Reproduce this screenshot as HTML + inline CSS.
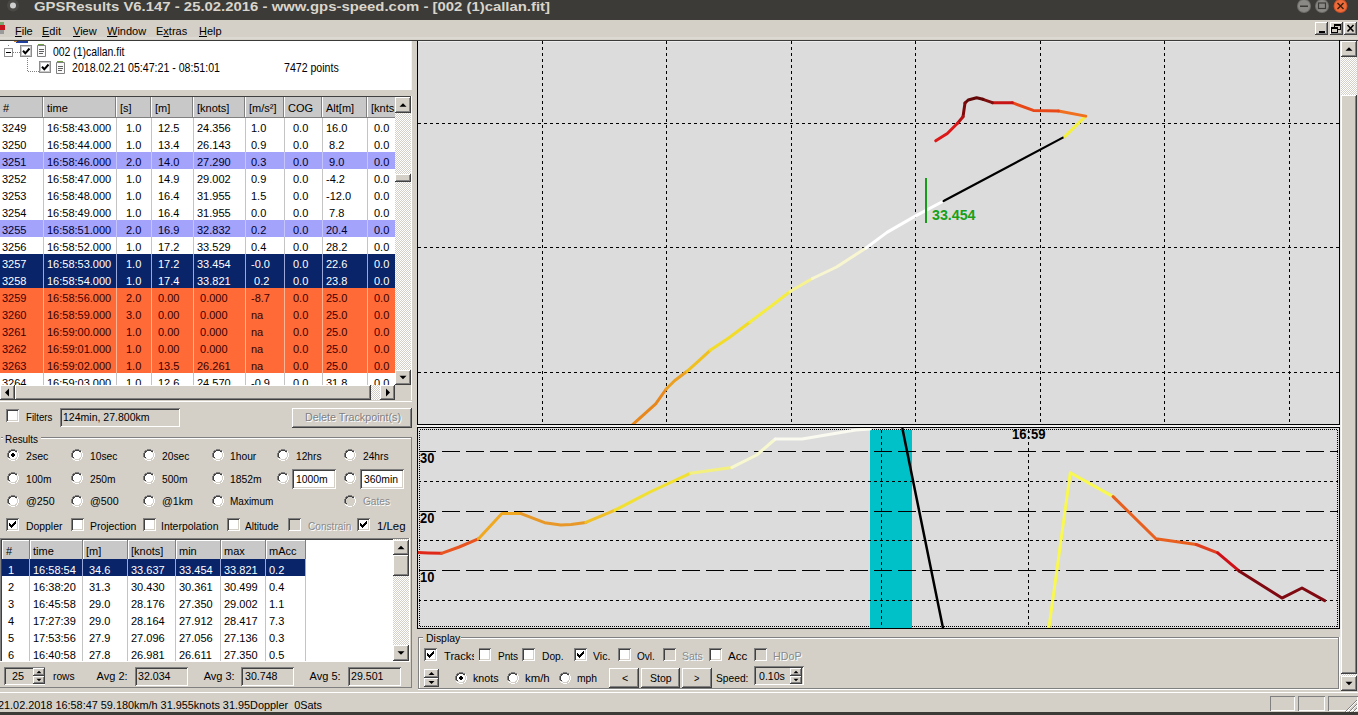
<!DOCTYPE html>
<html><head><meta charset="utf-8"><style>
html,body{margin:0;padding:0;width:1358px;height:715px;overflow:hidden;background:#d4d0c8;position:relative;font-family:"Liberation Sans",sans-serif;color:#000}
div{position:absolute;box-sizing:border-box}
.t{white-space:pre}
</style></head><body>
<svg width="0" height="0" style="position:absolute"><defs><g id="rad"><rect x="4" y="0" width="4" height="1" fill="#808080"/><rect x="2" y="1" width="2" height="1" fill="#808080"/><rect x="4" y="1" width="4" height="1" fill="#404040"/><rect x="8" y="1" width="2" height="1" fill="#808080"/><rect x="1" y="2" width="1" height="1" fill="#808080"/><rect x="2" y="2" width="2" height="1" fill="#404040"/><rect x="4" y="2" width="4" height="1" fill="#fff"/><rect x="8" y="2" width="2" height="1" fill="#404040"/><rect x="10" y="2" width="1" height="1" fill="#fff"/><rect x="1" y="3" width="1" height="1" fill="#808080"/><rect x="2" y="3" width="1" height="1" fill="#404040"/><rect x="3" y="3" width="6" height="1" fill="#fff"/><rect x="9" y="3" width="1" height="1" fill="#d4d0c8"/><rect x="10" y="3" width="1" height="1" fill="#fff"/><rect x="0" y="4" width="1" height="1" fill="#808080"/><rect x="1" y="4" width="1" height="1" fill="#404040"/><rect x="2" y="4" width="8" height="1" fill="#fff"/><rect x="10" y="4" width="1" height="1" fill="#d4d0c8"/><rect x="11" y="4" width="1" height="1" fill="#fff"/><rect x="0" y="5" width="1" height="1" fill="#808080"/><rect x="1" y="5" width="1" height="1" fill="#404040"/><rect x="2" y="5" width="8" height="1" fill="#fff"/><rect x="10" y="5" width="1" height="1" fill="#d4d0c8"/><rect x="11" y="5" width="1" height="1" fill="#fff"/><rect x="0" y="6" width="1" height="1" fill="#808080"/><rect x="1" y="6" width="1" height="1" fill="#404040"/><rect x="2" y="6" width="8" height="1" fill="#fff"/><rect x="10" y="6" width="1" height="1" fill="#d4d0c8"/><rect x="11" y="6" width="1" height="1" fill="#fff"/><rect x="0" y="7" width="1" height="1" fill="#808080"/><rect x="1" y="7" width="1" height="1" fill="#404040"/><rect x="2" y="7" width="8" height="1" fill="#fff"/><rect x="10" y="7" width="1" height="1" fill="#d4d0c8"/><rect x="11" y="7" width="1" height="1" fill="#fff"/><rect x="1" y="8" width="1" height="1" fill="#808080"/><rect x="2" y="8" width="1" height="1" fill="#404040"/><rect x="3" y="8" width="6" height="1" fill="#fff"/><rect x="9" y="8" width="1" height="1" fill="#d4d0c8"/><rect x="10" y="8" width="1" height="1" fill="#fff"/><rect x="1" y="9" width="1" height="1" fill="#fff"/><rect x="2" y="9" width="2" height="1" fill="#d4d0c8"/><rect x="4" y="9" width="4" height="1" fill="#fff"/><rect x="8" y="9" width="2" height="1" fill="#d4d0c8"/><rect x="10" y="9" width="1" height="1" fill="#fff"/><rect x="2" y="10" width="2" height="1" fill="#fff"/><rect x="4" y="10" width="4" height="1" fill="#d4d0c8"/><rect x="8" y="10" width="1" height="1" fill="#d4d0c8"/><rect x="9" y="10" width="1" height="1" fill="#fff"/><rect x="4" y="11" width="4" height="1" fill="#fff"/></g><g id="radd"><rect x="4" y="0" width="4" height="1" fill="#808080"/><rect x="2" y="1" width="2" height="1" fill="#808080"/><rect x="4" y="1" width="4" height="1" fill="#404040"/><rect x="8" y="1" width="2" height="1" fill="#808080"/><rect x="1" y="2" width="1" height="1" fill="#808080"/><rect x="2" y="2" width="2" height="1" fill="#404040"/><rect x="4" y="2" width="4" height="1" fill="#d4d0c8"/><rect x="8" y="2" width="2" height="1" fill="#404040"/><rect x="10" y="2" width="1" height="1" fill="#fff"/><rect x="1" y="3" width="1" height="1" fill="#808080"/><rect x="2" y="3" width="1" height="1" fill="#404040"/><rect x="3" y="3" width="6" height="1" fill="#d4d0c8"/><rect x="9" y="3" width="1" height="1" fill="#d4d0c8"/><rect x="10" y="3" width="1" height="1" fill="#fff"/><rect x="0" y="4" width="1" height="1" fill="#808080"/><rect x="1" y="4" width="1" height="1" fill="#404040"/><rect x="2" y="4" width="8" height="1" fill="#d4d0c8"/><rect x="10" y="4" width="1" height="1" fill="#d4d0c8"/><rect x="11" y="4" width="1" height="1" fill="#fff"/><rect x="0" y="5" width="1" height="1" fill="#808080"/><rect x="1" y="5" width="1" height="1" fill="#404040"/><rect x="2" y="5" width="8" height="1" fill="#d4d0c8"/><rect x="10" y="5" width="1" height="1" fill="#d4d0c8"/><rect x="11" y="5" width="1" height="1" fill="#fff"/><rect x="0" y="6" width="1" height="1" fill="#808080"/><rect x="1" y="6" width="1" height="1" fill="#404040"/><rect x="2" y="6" width="8" height="1" fill="#d4d0c8"/><rect x="10" y="6" width="1" height="1" fill="#d4d0c8"/><rect x="11" y="6" width="1" height="1" fill="#fff"/><rect x="0" y="7" width="1" height="1" fill="#808080"/><rect x="1" y="7" width="1" height="1" fill="#404040"/><rect x="2" y="7" width="8" height="1" fill="#d4d0c8"/><rect x="10" y="7" width="1" height="1" fill="#d4d0c8"/><rect x="11" y="7" width="1" height="1" fill="#fff"/><rect x="1" y="8" width="1" height="1" fill="#808080"/><rect x="2" y="8" width="1" height="1" fill="#404040"/><rect x="3" y="8" width="6" height="1" fill="#d4d0c8"/><rect x="9" y="8" width="1" height="1" fill="#d4d0c8"/><rect x="10" y="8" width="1" height="1" fill="#fff"/><rect x="1" y="9" width="1" height="1" fill="#fff"/><rect x="2" y="9" width="2" height="1" fill="#d4d0c8"/><rect x="4" y="9" width="4" height="1" fill="#d4d0c8"/><rect x="8" y="9" width="2" height="1" fill="#d4d0c8"/><rect x="10" y="9" width="1" height="1" fill="#fff"/><rect x="2" y="10" width="2" height="1" fill="#fff"/><rect x="4" y="10" width="4" height="1" fill="#d4d0c8"/><rect x="8" y="10" width="1" height="1" fill="#d4d0c8"/><rect x="9" y="10" width="1" height="1" fill="#fff"/><rect x="4" y="11" width="4" height="1" fill="#fff"/></g><g id="dot"><rect x="5" y="4" width="2" height="4" fill="#000"/><rect x="4" y="5" width="4" height="2" fill="#000"/></g><g id="chk"><rect x="9" y="3" width="1" height="1" fill="#000"/><rect x="8" y="4" width="2" height="1" fill="#000"/><rect x="3" y="5" width="1" height="1" fill="#000"/><rect x="7" y="5" width="3" height="1" fill="#000"/><rect x="3" y="6" width="2" height="1" fill="#000"/><rect x="6" y="6" width="3" height="1" fill="#000"/><rect x="3" y="7" width="5" height="1" fill="#000"/><rect x="4" y="8" width="3" height="1" fill="#000"/><rect x="5" y="9" width="1" height="1" fill="#000"/></g></defs></svg>
<div style="left:0px;top:0px;width:1358px;height:20px;background:#3c3b37"></div>
<svg style="position:absolute;left:0;top:0" width="30" height="19"><circle cx="13" cy="5.5" r="6" fill="#4a4945"/><circle cx="13" cy="5.5" r="3" fill="#cfcfcf"/></svg>
<div class="t" style="left:34.00px;top:-0.00px;font-size:13px;line-height:13px;transform:scaleX(1.1458);transform-origin:0 0;font-weight:bold;color:#d9d5cc;">GPSResults V6.147 - 25.02.2016 - www.gps-speed.com - [002 (1)callan.fit]</div>
<svg style="position:absolute;left:1290;top:0" width="68" height="19" style="left:1290px">
</svg>
<svg style="position:absolute;left:1290px;top:0" width="68" height="19"><circle cx="14" cy="6" r="7" fill="#6f6e6a"/><circle cx="14" cy="6" r="6" fill="#8a8985"/><rect x="10" y="5.5" width="8" height="1.5" fill="#3c3b37"/><circle cx="32" cy="6" r="7" fill="#6f6e6a"/><circle cx="32" cy="6" r="6" fill="#8a8985"/><rect x="28.5" y="3" width="7" height="5.5" fill="none" stroke="#3c3b37" stroke-width="1.2"/><circle cx="50.5" cy="6" r="7" fill="#c8502a"/><circle cx="50.5" cy="6" r="6" fill="#ef6b3a"/><path d="M47.5 3 L53.5 9 M53.5 3 L47.5 9" stroke="#3a2010" stroke-width="1.4"/></svg>
<div style="left:0px;top:20px;width:1358px;height:20px;background:#d4d0c8"></div>
<div style="left:0px;top:37px;width:1358px;height:2px;background:#dcd9d2"></div>
<div style="left:0px;top:40px;width:1358px;height:1px;background:#3a3a38"></div>
<svg style="position:absolute;left:0;top:19px" width="6" height="20"><rect x="0" y="3" width="4" height="3" fill="#7aa870"/><rect x="0" y="6" width="5" height="5" fill="#c8141e"/><rect x="0" y="11" width="4" height="4" fill="#9a9a9a"/></svg>
<div class="t" style="left:15.00px;top:25.69px;font-size:11px;line-height:11px;"><u>F</u>ile</div>
<div class="t" style="left:42.00px;top:25.69px;font-size:11px;line-height:11px;"><u>E</u>dit</div>
<div class="t" style="left:73.00px;top:25.69px;font-size:11px;line-height:11px;"><u>V</u>iew</div>
<div class="t" style="left:107.00px;top:25.69px;font-size:11px;line-height:11px;"><u>W</u>indow</div>
<div class="t" style="left:156.00px;top:25.69px;font-size:11px;line-height:11px;">E<u>x</u>tras</div>
<div class="t" style="left:199.00px;top:25.69px;font-size:11px;line-height:11px;"><u>H</u>elp</div>
<div style="left:1315px;top:22px;width:13px;height:13px;background:#d4d0c8;box-shadow:inset -1px -1px #404040,inset 1px 1px #fff,inset -2px -2px #808080,inset 2px 2px #d4d0c8;"></div>
<div style="left:1330px;top:22px;width:13px;height:13px;background:#d4d0c8;box-shadow:inset -1px -1px #404040,inset 1px 1px #fff,inset -2px -2px #808080,inset 2px 2px #d4d0c8;"></div>
<div style="left:1344px;top:22px;width:13px;height:13px;background:#d4d0c8;box-shadow:inset -1px -1px #404040,inset 1px 1px #fff,inset -2px -2px #808080,inset 2px 2px #d4d0c8;"></div>
<svg style="position:absolute;left:1315px;top:22px" width="43" height="13"><rect x="4" y="9" width="6" height="2" fill="#000"/><rect x="19.5" y="2.5" width="6" height="5" fill="none" stroke="#000" stroke-width="1"/><rect x="19" y="2" width="7" height="2" fill="#000"/><rect x="16.5" y="5.5" width="6" height="5" fill="#d4d0c8" stroke="#000" stroke-width="1"/><rect x="16" y="5" width="7" height="2" fill="#000"/><path d="M32.5 3 L38.5 9.5 M38.5 3 L32.5 9.5" stroke="#000" stroke-width="1.6"/></svg>
<div style="left:0px;top:712px;width:1358px;height:3px;background:#3c3b37"></div>
<div style="left:0px;top:41px;width:412px;height:51px;background:#fff"></div>
<div style="left:411px;top:41px;width:1px;height:51px;background:#f4f4f4"></div>
<div style="left:0px;top:90px;width:413px;height:2px;background:#d4d0c8"></div>
<div style="left:412px;top:41px;width:5px;height:51px;background:#d4d0c8"></div>
<div style="left:412px;top:41px;width:1px;height:51px;background:#f0f0f0"></div>
<svg style="position:absolute;left:14px;top:41px" width="16" height="3"><rect x="2" y="0" width="12" height="2" fill="#2040a0"/><rect x="0" y="0" width="3" height="1" fill="#c08040"/></svg>
<svg style="position:absolute;left:0;top:40px" width="80" height="40">
<path d="M8.5 5 V7 M8.5 9 V7" stroke="#808080" stroke-width="1" stroke-dasharray="1 1"/>
<rect x="4.5" y="8.5" width="8" height="8" fill="#fff" stroke="#909090"/>
<path d="M6 12.5 H11" stroke="#000"/>
<path d="M13 12.5 H20" stroke="#808080" stroke-dasharray="1 1"/>
<path d="M27.5 18 V31.5 H39" stroke="#808080" stroke-dasharray="1 1" fill="none"/>
</svg>
<svg style="position:absolute;left:20px;top:45px" width="13" height="13"><rect x="0.5" y="0.5" width="11" height="11" fill="#fff" stroke="#8c8c8c"/><rect x="1.5" y="1.5" width="9" height="9" fill="none" stroke="#c8c8c8"/><path d="M3 5.8 L5.3 8.3 L9.5 3.5" stroke="#000" stroke-width="2" fill="none"/></svg>
<svg style="position:absolute;left:39px;top:61px" width="13" height="13"><rect x="0.5" y="0.5" width="11" height="11" fill="#fff" stroke="#8c8c8c"/><rect x="1.5" y="1.5" width="9" height="9" fill="none" stroke="#c8c8c8"/><path d="M3 5.8 L5.3 8.3 L9.5 3.5" stroke="#000" stroke-width="2" fill="none"/></svg>
<svg style="position:absolute;left:36px;top:44px" width="12" height="14"><path d="M1.5 1.5 H9.5 V12.5 H1.5 Z" fill="#fafafa" stroke="#808080"/><path d="M3 5.5 H8 M3 7.5 H8 M3 9.5 H7" stroke="#606060"/><path d="M2 1 L3 0 L4 1 L5 0 L6 1 L7 0 L8 1" stroke="#70a040" fill="none"/></svg>
<svg style="position:absolute;left:55px;top:61px" width="12" height="14"><path d="M1.5 1.5 H9.5 V12.5 H1.5 Z" fill="#fafafa" stroke="#808080"/><path d="M3 5.5 H8 M3 7.5 H8 M3 9.5 H7" stroke="#606060"/><path d="M2 1 L3 0 L4 1 L5 0 L6 1 L7 0 L8 1" stroke="#70a040" fill="none"/></svg>
<div class="t" style="left:53.00px;top:46.14px;font-size:12px;line-height:12px;transform:scaleX(0.8702);transform-origin:0 0;">002 (1)callan.fit</div>
<div class="t" style="left:72.00px;top:62.14px;font-size:12px;line-height:12px;transform:scaleX(0.8836);transform-origin:0 0;">2018.02.21 05:47:21 - 08:51:01</div>
<div class="t" style="left:284.00px;top:62.14px;font-size:12px;line-height:12px;transform:scaleX(0.8815);transform-origin:0 0;">7472 points</div>
<div style="left:0px;top:92px;width:413px;height:5px;background:#d4d0c8"></div>
<div style="left:0px;top:96px;width:412px;height:1px;background:#404040"></div>
<div style="left:0px;top:97px;width:395px;height:288px;background:#fff"></div>
<div style="left:0px;top:97px;width:395px;height:20px;background:#c8c8c8"></div>
<div style="left:0px;top:117px;width:395px;height:1px;background:#808080"></div>
<div style="left:0px;top:152px;width:395px;height:17px;background:#a3a3fb"></div>
<div style="left:0px;top:220px;width:395px;height:17px;background:#a3a3fb"></div>
<div style="left:0px;top:254px;width:395px;height:17px;background:#0a246a"></div>
<div style="left:0px;top:271px;width:395px;height:17px;background:#0a246a"></div>
<div style="left:0px;top:288px;width:395px;height:17px;background:#ff6a36"></div>
<div style="left:0px;top:305px;width:395px;height:17px;background:#ff6a36"></div>
<div style="left:0px;top:322px;width:395px;height:17px;background:#ff6a36"></div>
<div style="left:0px;top:339px;width:395px;height:17px;background:#ff6a36"></div>
<div style="left:0px;top:356px;width:395px;height:17px;background:#ff6a36"></div>
<div style="left:42px;top:97px;width:1px;height:20px;background:#808080"></div>
<div style="left:43px;top:97px;width:1px;height:20px;background:#fff"></div>
<div style="left:43px;top:118px;width:1px;height:17px;background:#c4c4c4"></div>
<div style="left:43px;top:135px;width:1px;height:17px;background:#c4c4c4"></div>
<div style="left:43px;top:152px;width:1px;height:17px;background:#c4c4ff"></div>
<div style="left:43px;top:169px;width:1px;height:17px;background:#c4c4c4"></div>
<div style="left:43px;top:186px;width:1px;height:17px;background:#c4c4c4"></div>
<div style="left:43px;top:203px;width:1px;height:17px;background:#c4c4c4"></div>
<div style="left:43px;top:220px;width:1px;height:17px;background:#c4c4ff"></div>
<div style="left:43px;top:237px;width:1px;height:17px;background:#c4c4c4"></div>
<div style="left:43px;top:254px;width:1px;height:17px;background:#9aa8dc"></div>
<div style="left:43px;top:271px;width:1px;height:17px;background:#9aa8dc"></div>
<div style="left:43px;top:288px;width:1px;height:17px;background:#ffb494"></div>
<div style="left:43px;top:305px;width:1px;height:17px;background:#ffb494"></div>
<div style="left:43px;top:322px;width:1px;height:17px;background:#ffb494"></div>
<div style="left:43px;top:339px;width:1px;height:17px;background:#ffb494"></div>
<div style="left:43px;top:356px;width:1px;height:17px;background:#ffb494"></div>
<div style="left:43px;top:373px;width:1px;height:12px;background:#c4c4c4"></div>
<div style="left:115px;top:97px;width:1px;height:20px;background:#808080"></div>
<div style="left:116px;top:97px;width:1px;height:20px;background:#fff"></div>
<div style="left:116px;top:118px;width:1px;height:17px;background:#c4c4c4"></div>
<div style="left:116px;top:135px;width:1px;height:17px;background:#c4c4c4"></div>
<div style="left:116px;top:152px;width:1px;height:17px;background:#c4c4ff"></div>
<div style="left:116px;top:169px;width:1px;height:17px;background:#c4c4c4"></div>
<div style="left:116px;top:186px;width:1px;height:17px;background:#c4c4c4"></div>
<div style="left:116px;top:203px;width:1px;height:17px;background:#c4c4c4"></div>
<div style="left:116px;top:220px;width:1px;height:17px;background:#c4c4ff"></div>
<div style="left:116px;top:237px;width:1px;height:17px;background:#c4c4c4"></div>
<div style="left:116px;top:254px;width:1px;height:17px;background:#9aa8dc"></div>
<div style="left:116px;top:271px;width:1px;height:17px;background:#9aa8dc"></div>
<div style="left:116px;top:288px;width:1px;height:17px;background:#ffb494"></div>
<div style="left:116px;top:305px;width:1px;height:17px;background:#ffb494"></div>
<div style="left:116px;top:322px;width:1px;height:17px;background:#ffb494"></div>
<div style="left:116px;top:339px;width:1px;height:17px;background:#ffb494"></div>
<div style="left:116px;top:356px;width:1px;height:17px;background:#ffb494"></div>
<div style="left:116px;top:373px;width:1px;height:12px;background:#c4c4c4"></div>
<div style="left:150px;top:97px;width:1px;height:20px;background:#808080"></div>
<div style="left:151px;top:97px;width:1px;height:20px;background:#fff"></div>
<div style="left:151px;top:118px;width:1px;height:17px;background:#c4c4c4"></div>
<div style="left:151px;top:135px;width:1px;height:17px;background:#c4c4c4"></div>
<div style="left:151px;top:152px;width:1px;height:17px;background:#c4c4ff"></div>
<div style="left:151px;top:169px;width:1px;height:17px;background:#c4c4c4"></div>
<div style="left:151px;top:186px;width:1px;height:17px;background:#c4c4c4"></div>
<div style="left:151px;top:203px;width:1px;height:17px;background:#c4c4c4"></div>
<div style="left:151px;top:220px;width:1px;height:17px;background:#c4c4ff"></div>
<div style="left:151px;top:237px;width:1px;height:17px;background:#c4c4c4"></div>
<div style="left:151px;top:254px;width:1px;height:17px;background:#9aa8dc"></div>
<div style="left:151px;top:271px;width:1px;height:17px;background:#9aa8dc"></div>
<div style="left:151px;top:288px;width:1px;height:17px;background:#ffb494"></div>
<div style="left:151px;top:305px;width:1px;height:17px;background:#ffb494"></div>
<div style="left:151px;top:322px;width:1px;height:17px;background:#ffb494"></div>
<div style="left:151px;top:339px;width:1px;height:17px;background:#ffb494"></div>
<div style="left:151px;top:356px;width:1px;height:17px;background:#ffb494"></div>
<div style="left:151px;top:373px;width:1px;height:12px;background:#c4c4c4"></div>
<div style="left:192px;top:97px;width:1px;height:20px;background:#808080"></div>
<div style="left:193px;top:97px;width:1px;height:20px;background:#fff"></div>
<div style="left:193px;top:118px;width:1px;height:17px;background:#c4c4c4"></div>
<div style="left:193px;top:135px;width:1px;height:17px;background:#c4c4c4"></div>
<div style="left:193px;top:152px;width:1px;height:17px;background:#c4c4ff"></div>
<div style="left:193px;top:169px;width:1px;height:17px;background:#c4c4c4"></div>
<div style="left:193px;top:186px;width:1px;height:17px;background:#c4c4c4"></div>
<div style="left:193px;top:203px;width:1px;height:17px;background:#c4c4c4"></div>
<div style="left:193px;top:220px;width:1px;height:17px;background:#c4c4ff"></div>
<div style="left:193px;top:237px;width:1px;height:17px;background:#c4c4c4"></div>
<div style="left:193px;top:254px;width:1px;height:17px;background:#9aa8dc"></div>
<div style="left:193px;top:271px;width:1px;height:17px;background:#9aa8dc"></div>
<div style="left:193px;top:288px;width:1px;height:17px;background:#ffb494"></div>
<div style="left:193px;top:305px;width:1px;height:17px;background:#ffb494"></div>
<div style="left:193px;top:322px;width:1px;height:17px;background:#ffb494"></div>
<div style="left:193px;top:339px;width:1px;height:17px;background:#ffb494"></div>
<div style="left:193px;top:356px;width:1px;height:17px;background:#ffb494"></div>
<div style="left:193px;top:373px;width:1px;height:12px;background:#c4c4c4"></div>
<div style="left:244px;top:97px;width:1px;height:20px;background:#808080"></div>
<div style="left:245px;top:97px;width:1px;height:20px;background:#fff"></div>
<div style="left:245px;top:118px;width:1px;height:17px;background:#c4c4c4"></div>
<div style="left:245px;top:135px;width:1px;height:17px;background:#c4c4c4"></div>
<div style="left:245px;top:152px;width:1px;height:17px;background:#c4c4ff"></div>
<div style="left:245px;top:169px;width:1px;height:17px;background:#c4c4c4"></div>
<div style="left:245px;top:186px;width:1px;height:17px;background:#c4c4c4"></div>
<div style="left:245px;top:203px;width:1px;height:17px;background:#c4c4c4"></div>
<div style="left:245px;top:220px;width:1px;height:17px;background:#c4c4ff"></div>
<div style="left:245px;top:237px;width:1px;height:17px;background:#c4c4c4"></div>
<div style="left:245px;top:254px;width:1px;height:17px;background:#9aa8dc"></div>
<div style="left:245px;top:271px;width:1px;height:17px;background:#9aa8dc"></div>
<div style="left:245px;top:288px;width:1px;height:17px;background:#ffb494"></div>
<div style="left:245px;top:305px;width:1px;height:17px;background:#ffb494"></div>
<div style="left:245px;top:322px;width:1px;height:17px;background:#ffb494"></div>
<div style="left:245px;top:339px;width:1px;height:17px;background:#ffb494"></div>
<div style="left:245px;top:356px;width:1px;height:17px;background:#ffb494"></div>
<div style="left:245px;top:373px;width:1px;height:12px;background:#c4c4c4"></div>
<div style="left:283px;top:97px;width:1px;height:20px;background:#808080"></div>
<div style="left:284px;top:97px;width:1px;height:20px;background:#fff"></div>
<div style="left:284px;top:118px;width:1px;height:17px;background:#c4c4c4"></div>
<div style="left:284px;top:135px;width:1px;height:17px;background:#c4c4c4"></div>
<div style="left:284px;top:152px;width:1px;height:17px;background:#c4c4ff"></div>
<div style="left:284px;top:169px;width:1px;height:17px;background:#c4c4c4"></div>
<div style="left:284px;top:186px;width:1px;height:17px;background:#c4c4c4"></div>
<div style="left:284px;top:203px;width:1px;height:17px;background:#c4c4c4"></div>
<div style="left:284px;top:220px;width:1px;height:17px;background:#c4c4ff"></div>
<div style="left:284px;top:237px;width:1px;height:17px;background:#c4c4c4"></div>
<div style="left:284px;top:254px;width:1px;height:17px;background:#9aa8dc"></div>
<div style="left:284px;top:271px;width:1px;height:17px;background:#9aa8dc"></div>
<div style="left:284px;top:288px;width:1px;height:17px;background:#ffb494"></div>
<div style="left:284px;top:305px;width:1px;height:17px;background:#ffb494"></div>
<div style="left:284px;top:322px;width:1px;height:17px;background:#ffb494"></div>
<div style="left:284px;top:339px;width:1px;height:17px;background:#ffb494"></div>
<div style="left:284px;top:356px;width:1px;height:17px;background:#ffb494"></div>
<div style="left:284px;top:373px;width:1px;height:12px;background:#c4c4c4"></div>
<div style="left:321px;top:97px;width:1px;height:20px;background:#808080"></div>
<div style="left:322px;top:97px;width:1px;height:20px;background:#fff"></div>
<div style="left:322px;top:118px;width:1px;height:17px;background:#c4c4c4"></div>
<div style="left:322px;top:135px;width:1px;height:17px;background:#c4c4c4"></div>
<div style="left:322px;top:152px;width:1px;height:17px;background:#c4c4ff"></div>
<div style="left:322px;top:169px;width:1px;height:17px;background:#c4c4c4"></div>
<div style="left:322px;top:186px;width:1px;height:17px;background:#c4c4c4"></div>
<div style="left:322px;top:203px;width:1px;height:17px;background:#c4c4c4"></div>
<div style="left:322px;top:220px;width:1px;height:17px;background:#c4c4ff"></div>
<div style="left:322px;top:237px;width:1px;height:17px;background:#c4c4c4"></div>
<div style="left:322px;top:254px;width:1px;height:17px;background:#9aa8dc"></div>
<div style="left:322px;top:271px;width:1px;height:17px;background:#9aa8dc"></div>
<div style="left:322px;top:288px;width:1px;height:17px;background:#ffb494"></div>
<div style="left:322px;top:305px;width:1px;height:17px;background:#ffb494"></div>
<div style="left:322px;top:322px;width:1px;height:17px;background:#ffb494"></div>
<div style="left:322px;top:339px;width:1px;height:17px;background:#ffb494"></div>
<div style="left:322px;top:356px;width:1px;height:17px;background:#ffb494"></div>
<div style="left:322px;top:373px;width:1px;height:12px;background:#c4c4c4"></div>
<div style="left:366px;top:97px;width:1px;height:20px;background:#808080"></div>
<div style="left:367px;top:97px;width:1px;height:20px;background:#fff"></div>
<div style="left:367px;top:118px;width:1px;height:17px;background:#c4c4c4"></div>
<div style="left:367px;top:135px;width:1px;height:17px;background:#c4c4c4"></div>
<div style="left:367px;top:152px;width:1px;height:17px;background:#c4c4ff"></div>
<div style="left:367px;top:169px;width:1px;height:17px;background:#c4c4c4"></div>
<div style="left:367px;top:186px;width:1px;height:17px;background:#c4c4c4"></div>
<div style="left:367px;top:203px;width:1px;height:17px;background:#c4c4c4"></div>
<div style="left:367px;top:220px;width:1px;height:17px;background:#c4c4ff"></div>
<div style="left:367px;top:237px;width:1px;height:17px;background:#c4c4c4"></div>
<div style="left:367px;top:254px;width:1px;height:17px;background:#9aa8dc"></div>
<div style="left:367px;top:271px;width:1px;height:17px;background:#9aa8dc"></div>
<div style="left:367px;top:288px;width:1px;height:17px;background:#ffb494"></div>
<div style="left:367px;top:305px;width:1px;height:17px;background:#ffb494"></div>
<div style="left:367px;top:322px;width:1px;height:17px;background:#ffb494"></div>
<div style="left:367px;top:339px;width:1px;height:17px;background:#ffb494"></div>
<div style="left:367px;top:356px;width:1px;height:17px;background:#ffb494"></div>
<div style="left:367px;top:373px;width:1px;height:12px;background:#c4c4c4"></div>
<div class="t" style="left:3.00px;top:102.69px;font-size:11px;line-height:11px;">#</div>
<div class="t" style="left:47.00px;top:102.69px;font-size:11px;line-height:11px;">time</div>
<div class="t" style="left:120.00px;top:102.69px;font-size:11px;line-height:11px;">[s]</div>
<div class="t" style="left:155.00px;top:102.69px;font-size:11px;line-height:11px;">[m]</div>
<div class="t" style="left:197.00px;top:102.69px;font-size:11px;line-height:11px;">[knots]</div>
<div class="t" style="left:249.00px;top:102.69px;font-size:11px;line-height:11px;">[m/s²]</div>
<div class="t" style="left:288.00px;top:102.69px;font-size:11px;line-height:11px;">COG</div>
<div class="t" style="left:326.00px;top:102.69px;font-size:11px;line-height:11px;">Alt[m]</div>
<div class="t" style="left:371.00px;top:102.69px;font-size:11px;line-height:11px;">[knts</div>
<div class="t" style="left:2.00px;top:122.69px;font-size:11px;line-height:11px;color:#000;">3249</div>
<div class="t" style="left:47.00px;top:122.69px;font-size:11px;line-height:11px;color:#000;">16:58:43.000</div>
<div class="t" style="left:126.00px;top:122.69px;font-size:11px;line-height:11px;color:#000;">1.0</div>
<div class="t" style="left:158.00px;top:122.69px;font-size:11px;line-height:11px;color:#000;">12.5</div>
<div class="t" style="left:197.00px;top:122.69px;font-size:11px;line-height:11px;color:#000;">24.356</div>
<div class="t" style="left:251.00px;top:122.69px;font-size:11px;line-height:11px;color:#000;">1.0</div>
<div class="t" style="left:293.00px;top:122.69px;font-size:11px;line-height:11px;color:#000;">0.0</div>
<div class="t" style="left:326.00px;top:122.69px;font-size:11px;line-height:11px;color:#000;">16.0</div>
<div class="t" style="left:374.00px;top:122.69px;font-size:11px;line-height:11px;color:#000;">0.0</div>
<div class="t" style="left:2.00px;top:139.69px;font-size:11px;line-height:11px;color:#000;">3250</div>
<div class="t" style="left:47.00px;top:139.69px;font-size:11px;line-height:11px;color:#000;">16:58:44.000</div>
<div class="t" style="left:126.00px;top:139.69px;font-size:11px;line-height:11px;color:#000;">1.0</div>
<div class="t" style="left:158.00px;top:139.69px;font-size:11px;line-height:11px;color:#000;">13.4</div>
<div class="t" style="left:197.00px;top:139.69px;font-size:11px;line-height:11px;color:#000;">26.143</div>
<div class="t" style="left:251.00px;top:139.69px;font-size:11px;line-height:11px;color:#000;">0.9</div>
<div class="t" style="left:293.00px;top:139.69px;font-size:11px;line-height:11px;color:#000;">0.0</div>
<div class="t" style="left:326.00px;top:139.69px;font-size:11px;line-height:11px;color:#000;"> 8.2</div>
<div class="t" style="left:374.00px;top:139.69px;font-size:11px;line-height:11px;color:#000;">0.0</div>
<div class="t" style="left:2.00px;top:156.69px;font-size:11px;line-height:11px;color:#000030;">3251</div>
<div class="t" style="left:47.00px;top:156.69px;font-size:11px;line-height:11px;color:#000030;">16:58:46.000</div>
<div class="t" style="left:126.00px;top:156.69px;font-size:11px;line-height:11px;color:#000030;">2.0</div>
<div class="t" style="left:158.00px;top:156.69px;font-size:11px;line-height:11px;color:#000030;">14.0</div>
<div class="t" style="left:197.00px;top:156.69px;font-size:11px;line-height:11px;color:#000030;">27.290</div>
<div class="t" style="left:251.00px;top:156.69px;font-size:11px;line-height:11px;color:#000030;">0.3</div>
<div class="t" style="left:293.00px;top:156.69px;font-size:11px;line-height:11px;color:#000030;">0.0</div>
<div class="t" style="left:326.00px;top:156.69px;font-size:11px;line-height:11px;color:#000030;"> 9.0</div>
<div class="t" style="left:374.00px;top:156.69px;font-size:11px;line-height:11px;color:#000030;">0.0</div>
<div class="t" style="left:2.00px;top:173.69px;font-size:11px;line-height:11px;color:#000;">3252</div>
<div class="t" style="left:47.00px;top:173.69px;font-size:11px;line-height:11px;color:#000;">16:58:47.000</div>
<div class="t" style="left:126.00px;top:173.69px;font-size:11px;line-height:11px;color:#000;">1.0</div>
<div class="t" style="left:158.00px;top:173.69px;font-size:11px;line-height:11px;color:#000;">14.9</div>
<div class="t" style="left:197.00px;top:173.69px;font-size:11px;line-height:11px;color:#000;">29.002</div>
<div class="t" style="left:251.00px;top:173.69px;font-size:11px;line-height:11px;color:#000;">0.9</div>
<div class="t" style="left:293.00px;top:173.69px;font-size:11px;line-height:11px;color:#000;">0.0</div>
<div class="t" style="left:326.00px;top:173.69px;font-size:11px;line-height:11px;color:#000;">-4.2</div>
<div class="t" style="left:374.00px;top:173.69px;font-size:11px;line-height:11px;color:#000;">0.0</div>
<div class="t" style="left:2.00px;top:190.69px;font-size:11px;line-height:11px;color:#000;">3253</div>
<div class="t" style="left:47.00px;top:190.69px;font-size:11px;line-height:11px;color:#000;">16:58:48.000</div>
<div class="t" style="left:126.00px;top:190.69px;font-size:11px;line-height:11px;color:#000;">1.0</div>
<div class="t" style="left:158.00px;top:190.69px;font-size:11px;line-height:11px;color:#000;">16.4</div>
<div class="t" style="left:197.00px;top:190.69px;font-size:11px;line-height:11px;color:#000;">31.955</div>
<div class="t" style="left:251.00px;top:190.69px;font-size:11px;line-height:11px;color:#000;">1.5</div>
<div class="t" style="left:293.00px;top:190.69px;font-size:11px;line-height:11px;color:#000;">0.0</div>
<div class="t" style="left:326.00px;top:190.69px;font-size:11px;line-height:11px;color:#000;">-12.0</div>
<div class="t" style="left:374.00px;top:190.69px;font-size:11px;line-height:11px;color:#000;">0.0</div>
<div class="t" style="left:2.00px;top:207.69px;font-size:11px;line-height:11px;color:#000;">3254</div>
<div class="t" style="left:47.00px;top:207.69px;font-size:11px;line-height:11px;color:#000;">16:58:49.000</div>
<div class="t" style="left:126.00px;top:207.69px;font-size:11px;line-height:11px;color:#000;">1.0</div>
<div class="t" style="left:158.00px;top:207.69px;font-size:11px;line-height:11px;color:#000;">16.4</div>
<div class="t" style="left:197.00px;top:207.69px;font-size:11px;line-height:11px;color:#000;">31.955</div>
<div class="t" style="left:251.00px;top:207.69px;font-size:11px;line-height:11px;color:#000;">0.0</div>
<div class="t" style="left:293.00px;top:207.69px;font-size:11px;line-height:11px;color:#000;">0.0</div>
<div class="t" style="left:326.00px;top:207.69px;font-size:11px;line-height:11px;color:#000;"> 7.8</div>
<div class="t" style="left:374.00px;top:207.69px;font-size:11px;line-height:11px;color:#000;">0.0</div>
<div class="t" style="left:2.00px;top:224.69px;font-size:11px;line-height:11px;color:#000030;">3255</div>
<div class="t" style="left:47.00px;top:224.69px;font-size:11px;line-height:11px;color:#000030;">16:58:51.000</div>
<div class="t" style="left:126.00px;top:224.69px;font-size:11px;line-height:11px;color:#000030;">2.0</div>
<div class="t" style="left:158.00px;top:224.69px;font-size:11px;line-height:11px;color:#000030;">16.9</div>
<div class="t" style="left:197.00px;top:224.69px;font-size:11px;line-height:11px;color:#000030;">32.832</div>
<div class="t" style="left:251.00px;top:224.69px;font-size:11px;line-height:11px;color:#000030;">0.2</div>
<div class="t" style="left:293.00px;top:224.69px;font-size:11px;line-height:11px;color:#000030;">0.0</div>
<div class="t" style="left:326.00px;top:224.69px;font-size:11px;line-height:11px;color:#000030;">20.4</div>
<div class="t" style="left:374.00px;top:224.69px;font-size:11px;line-height:11px;color:#000030;">0.0</div>
<div class="t" style="left:2.00px;top:241.69px;font-size:11px;line-height:11px;color:#000;">3256</div>
<div class="t" style="left:47.00px;top:241.69px;font-size:11px;line-height:11px;color:#000;">16:58:52.000</div>
<div class="t" style="left:126.00px;top:241.69px;font-size:11px;line-height:11px;color:#000;">1.0</div>
<div class="t" style="left:158.00px;top:241.69px;font-size:11px;line-height:11px;color:#000;">17.2</div>
<div class="t" style="left:197.00px;top:241.69px;font-size:11px;line-height:11px;color:#000;">33.529</div>
<div class="t" style="left:251.00px;top:241.69px;font-size:11px;line-height:11px;color:#000;">0.4</div>
<div class="t" style="left:293.00px;top:241.69px;font-size:11px;line-height:11px;color:#000;">0.0</div>
<div class="t" style="left:326.00px;top:241.69px;font-size:11px;line-height:11px;color:#000;">28.2</div>
<div class="t" style="left:374.00px;top:241.69px;font-size:11px;line-height:11px;color:#000;">0.0</div>
<div class="t" style="left:2.00px;top:258.69px;font-size:11px;line-height:11px;color:#fff;">3257</div>
<div class="t" style="left:47.00px;top:258.69px;font-size:11px;line-height:11px;color:#fff;">16:58:53.000</div>
<div class="t" style="left:126.00px;top:258.69px;font-size:11px;line-height:11px;color:#fff;">1.0</div>
<div class="t" style="left:158.00px;top:258.69px;font-size:11px;line-height:11px;color:#fff;">17.2</div>
<div class="t" style="left:197.00px;top:258.69px;font-size:11px;line-height:11px;color:#fff;">33.454</div>
<div class="t" style="left:251.00px;top:258.69px;font-size:11px;line-height:11px;color:#fff;">-0.0</div>
<div class="t" style="left:293.00px;top:258.69px;font-size:11px;line-height:11px;color:#fff;">0.0</div>
<div class="t" style="left:326.00px;top:258.69px;font-size:11px;line-height:11px;color:#fff;">22.6</div>
<div class="t" style="left:374.00px;top:258.69px;font-size:11px;line-height:11px;color:#fff;">0.0</div>
<div class="t" style="left:2.00px;top:275.69px;font-size:11px;line-height:11px;color:#fff;">3258</div>
<div class="t" style="left:47.00px;top:275.69px;font-size:11px;line-height:11px;color:#fff;">16:58:54.000</div>
<div class="t" style="left:126.00px;top:275.69px;font-size:11px;line-height:11px;color:#fff;">1.0</div>
<div class="t" style="left:158.00px;top:275.69px;font-size:11px;line-height:11px;color:#fff;">17.4</div>
<div class="t" style="left:197.00px;top:275.69px;font-size:11px;line-height:11px;color:#fff;">33.821</div>
<div class="t" style="left:251.00px;top:275.69px;font-size:11px;line-height:11px;color:#fff;"> 0.2</div>
<div class="t" style="left:293.00px;top:275.69px;font-size:11px;line-height:11px;color:#fff;">0.0</div>
<div class="t" style="left:326.00px;top:275.69px;font-size:11px;line-height:11px;color:#fff;">23.8</div>
<div class="t" style="left:374.00px;top:275.69px;font-size:11px;line-height:11px;color:#fff;">0.0</div>
<div class="t" style="left:2.00px;top:292.69px;font-size:11px;line-height:11px;color:#3a0000;">3259</div>
<div class="t" style="left:47.00px;top:292.69px;font-size:11px;line-height:11px;color:#3a0000;">16:58:56.000</div>
<div class="t" style="left:126.00px;top:292.69px;font-size:11px;line-height:11px;color:#3a0000;">2.0</div>
<div class="t" style="left:158.00px;top:292.69px;font-size:11px;line-height:11px;color:#3a0000;">0.00</div>
<div class="t" style="left:197.00px;top:292.69px;font-size:11px;line-height:11px;color:#3a0000;"> 0.000</div>
<div class="t" style="left:251.00px;top:292.69px;font-size:11px;line-height:11px;color:#3a0000;">-8.7</div>
<div class="t" style="left:293.00px;top:292.69px;font-size:11px;line-height:11px;color:#3a0000;">0.0</div>
<div class="t" style="left:326.00px;top:292.69px;font-size:11px;line-height:11px;color:#3a0000;">25.0</div>
<div class="t" style="left:374.00px;top:292.69px;font-size:11px;line-height:11px;color:#3a0000;">0.0</div>
<div class="t" style="left:2.00px;top:309.69px;font-size:11px;line-height:11px;color:#3a0000;">3260</div>
<div class="t" style="left:47.00px;top:309.69px;font-size:11px;line-height:11px;color:#3a0000;">16:58:59.000</div>
<div class="t" style="left:126.00px;top:309.69px;font-size:11px;line-height:11px;color:#3a0000;">3.0</div>
<div class="t" style="left:158.00px;top:309.69px;font-size:11px;line-height:11px;color:#3a0000;">0.00</div>
<div class="t" style="left:197.00px;top:309.69px;font-size:11px;line-height:11px;color:#3a0000;"> 0.000</div>
<div class="t" style="left:251.00px;top:309.69px;font-size:11px;line-height:11px;color:#3a0000;">na</div>
<div class="t" style="left:293.00px;top:309.69px;font-size:11px;line-height:11px;color:#3a0000;">0.0</div>
<div class="t" style="left:326.00px;top:309.69px;font-size:11px;line-height:11px;color:#3a0000;">25.0</div>
<div class="t" style="left:374.00px;top:309.69px;font-size:11px;line-height:11px;color:#3a0000;">0.0</div>
<div class="t" style="left:2.00px;top:326.69px;font-size:11px;line-height:11px;color:#3a0000;">3261</div>
<div class="t" style="left:47.00px;top:326.69px;font-size:11px;line-height:11px;color:#3a0000;">16:59:00.000</div>
<div class="t" style="left:126.00px;top:326.69px;font-size:11px;line-height:11px;color:#3a0000;">1.0</div>
<div class="t" style="left:158.00px;top:326.69px;font-size:11px;line-height:11px;color:#3a0000;">0.00</div>
<div class="t" style="left:197.00px;top:326.69px;font-size:11px;line-height:11px;color:#3a0000;"> 0.000</div>
<div class="t" style="left:251.00px;top:326.69px;font-size:11px;line-height:11px;color:#3a0000;">na</div>
<div class="t" style="left:293.00px;top:326.69px;font-size:11px;line-height:11px;color:#3a0000;">0.0</div>
<div class="t" style="left:326.00px;top:326.69px;font-size:11px;line-height:11px;color:#3a0000;">25.0</div>
<div class="t" style="left:374.00px;top:326.69px;font-size:11px;line-height:11px;color:#3a0000;">0.0</div>
<div class="t" style="left:2.00px;top:343.69px;font-size:11px;line-height:11px;color:#3a0000;">3262</div>
<div class="t" style="left:47.00px;top:343.69px;font-size:11px;line-height:11px;color:#3a0000;">16:59:01.000</div>
<div class="t" style="left:126.00px;top:343.69px;font-size:11px;line-height:11px;color:#3a0000;">1.0</div>
<div class="t" style="left:158.00px;top:343.69px;font-size:11px;line-height:11px;color:#3a0000;">0.00</div>
<div class="t" style="left:197.00px;top:343.69px;font-size:11px;line-height:11px;color:#3a0000;"> 0.000</div>
<div class="t" style="left:251.00px;top:343.69px;font-size:11px;line-height:11px;color:#3a0000;">na</div>
<div class="t" style="left:293.00px;top:343.69px;font-size:11px;line-height:11px;color:#3a0000;">0.0</div>
<div class="t" style="left:326.00px;top:343.69px;font-size:11px;line-height:11px;color:#3a0000;">25.0</div>
<div class="t" style="left:374.00px;top:343.69px;font-size:11px;line-height:11px;color:#3a0000;">0.0</div>
<div class="t" style="left:2.00px;top:360.69px;font-size:11px;line-height:11px;color:#3a0000;">3263</div>
<div class="t" style="left:47.00px;top:360.69px;font-size:11px;line-height:11px;color:#3a0000;">16:59:02.000</div>
<div class="t" style="left:126.00px;top:360.69px;font-size:11px;line-height:11px;color:#3a0000;">1.0</div>
<div class="t" style="left:158.00px;top:360.69px;font-size:11px;line-height:11px;color:#3a0000;">13.5</div>
<div class="t" style="left:197.00px;top:360.69px;font-size:11px;line-height:11px;color:#3a0000;">26.261</div>
<div class="t" style="left:251.00px;top:360.69px;font-size:11px;line-height:11px;color:#3a0000;">na</div>
<div class="t" style="left:293.00px;top:360.69px;font-size:11px;line-height:11px;color:#3a0000;">0.0</div>
<div class="t" style="left:326.00px;top:360.69px;font-size:11px;line-height:11px;color:#3a0000;">25.0</div>
<div class="t" style="left:374.00px;top:360.69px;font-size:11px;line-height:11px;color:#3a0000;">0.0</div>
<div class="t" style="left:2.00px;top:377.69px;font-size:11px;line-height:11px;color:#000;">3264</div>
<div class="t" style="left:47.00px;top:377.69px;font-size:11px;line-height:11px;color:#000;">16:59:03.000</div>
<div class="t" style="left:126.00px;top:377.69px;font-size:11px;line-height:11px;color:#000;">1.0</div>
<div class="t" style="left:158.00px;top:377.69px;font-size:11px;line-height:11px;color:#000;">12.6</div>
<div class="t" style="left:197.00px;top:377.69px;font-size:11px;line-height:11px;color:#000;">24.570</div>
<div class="t" style="left:251.00px;top:377.69px;font-size:11px;line-height:11px;color:#000;">-0.9</div>
<div class="t" style="left:293.00px;top:377.69px;font-size:11px;line-height:11px;color:#000;">0.0</div>
<div class="t" style="left:326.00px;top:377.69px;font-size:11px;line-height:11px;color:#000;">31.8</div>
<div class="t" style="left:374.00px;top:377.69px;font-size:11px;line-height:11px;color:#000;">0.0</div>
<div style="left:395px;top:97px;width:16px;height:288px;background-color:#fff;background-image:repeating-conic-gradient(#d4d0c8 0 25%,#fff 0 50%);background-size:2px 2px;"></div>
<div style="left:395px;top:97px;width:16px;height:16px;background:#d4d0c8;box-shadow:inset -1px -1px #404040,inset 1px 1px #fff,inset -2px -2px #808080,inset 2px 2px #d4d0c8;"></div>
<svg style="position:absolute;left:0;top:0;overflow:visible" width="1" height="1"><path d="M399.5 106.75 L406.5 106.75 L403 103.25 Z" fill="#000"/></svg>
<div style="left:395px;top:174px;width:16px;height:8px;background:#d4d0c8;box-shadow:inset -1px -1px #404040,inset 1px 1px #fff,inset -2px -2px #808080,inset 2px 2px #d4d0c8;"></div>
<div style="left:395px;top:370px;width:16px;height:15px;background:#d4d0c8;box-shadow:inset -1px -1px #404040,inset 1px 1px #fff,inset -2px -2px #808080,inset 2px 2px #d4d0c8;"></div>
<svg style="position:absolute;left:0;top:0;overflow:visible" width="1" height="1"><path d="M399.5 375.75 L406.5 375.75 L403 379.25 Z" fill="#000"/></svg>
<div style="left:0px;top:385px;width:395px;height:15px;background-color:#fff;background-image:repeating-conic-gradient(#d4d0c8 0 25%,#fff 0 50%);background-size:2px 2px;"></div>
<div style="left:0px;top:385px;width:15px;height:15px;background:#d4d0c8;box-shadow:inset -1px -1px #404040,inset 1px 1px #fff,inset -2px -2px #808080,inset 2px 2px #d4d0c8;"></div>
<svg style="position:absolute;left:0;top:385px" width="15" height="15"><path d="M5 7.5 L9 3.5 L9 11.5 Z" fill="#000"/></svg>
<div style="left:15px;top:385px;width:356px;height:15px;background:#d4d0c8;box-shadow:inset -1px -1px #404040,inset 1px 1px #fff,inset -2px -2px #808080,inset 2px 2px #d4d0c8;"></div>
<div style="left:380px;top:385px;width:15px;height:15px;background:#d4d0c8;box-shadow:inset -1px -1px #404040,inset 1px 1px #fff,inset -2px -2px #808080,inset 2px 2px #d4d0c8;"></div>
<svg style="position:absolute;left:380px;top:385px" width="15" height="15"><path d="M10 7.5 L6 3.5 L6 11.5 Z" fill="#000"/></svg>
<div style="left:395px;top:385px;width:16px;height:15px;background:#d4d0c8"></div>
<div style="left:411px;top:96px;width:1px;height:305px;background:#fff"></div>
<div style="left:0px;top:400px;width:412px;height:2px;background:#fff"></div>
<div style="left:0px;top:400px;width:412px;height:1px;background:#d4d0c8"></div>
<div style="left:0px;top:402px;width:412px;height:286px;background:#d4d0c8"></div>
<div style="left:411px;top:437px;width:1px;height:251px;background:#808080"></div>
<div style="left:412px;top:437px;width:1px;height:252px;background:#fff"></div>
<div style="left:6px;top:409px;width:13px;height:13px;background:#fff;box-shadow:inset 1px 1px #808080,inset -1px -1px #fff,inset 2px 2px #404040,inset -2px -2px #d4d0c8;"></div>
<div class="t" style="left:25.50px;top:411.69px;font-size:11px;line-height:11px;transform:scaleX(0.8781);transform-origin:0 0;">Filters</div>
<div style="left:60px;top:408px;width:120px;height:19px;background:#d4d0c8;box-shadow:inset 1px 1px #808080,inset -1px -1px #fff,inset 2px 2px #404040,inset -2px -2px #d4d0c8;"></div>
<div class="t" style="left:63.40px;top:412.19px;font-size:11px;line-height:11px;transform:scaleX(0.9569);transform-origin:0 0;">124min, 27.800km</div>
<div style="left:292px;top:408px;width:120px;height:20px;background:#d4d0c8;box-shadow:inset -1px -1px #404040,inset 1px 1px #fff,inset -2px -2px #808080,inset 2px 2px #d4d0c8;"></div>
<div class="t" style="left:304.50px;top:411.69px;font-size:11px;line-height:11px;transform:scaleX(0.9751);transform-origin:0 0;color:#808080;text-shadow:1px 1px #fff;">Delete Trackpoint(s)</div>
<div style="left:1px;top:437px;width:410px;height:1px;background:#808080"></div>
<div style="left:1px;top:438px;width:410px;height:1px;background:#fff"></div>
<div style="left:3px;top:430px;width:38px;height:12px;background:#d4d0c8"></div>
<div class="t" style="left:5.00px;top:433.69px;font-size:11px;line-height:11px;transform:scaleX(0.8992);transform-origin:0 0;">Results</div>
<svg style="position:absolute;left:7px;top:449px" width="12" height="12" shape-rendering="crispEdges"><use href="#rad"/><use href='#dot'/></svg>
<div class="t" style="left:25.50px;top:450.69px;font-size:11px;line-height:11px;transform:scaleX(0.9634);transform-origin:0 0;">2sec</div>
<svg style="position:absolute;left:71px;top:449px" width="12" height="12" shape-rendering="crispEdges"><use href="#rad"/></svg>
<div class="t" style="left:89.70px;top:450.69px;font-size:11px;line-height:11px;transform:scaleX(0.9336);transform-origin:0 0;">10sec</div>
<svg style="position:absolute;left:143px;top:449px" width="12" height="12" shape-rendering="crispEdges"><use href="#rad"/></svg>
<div class="t" style="left:161.60px;top:450.69px;font-size:11px;line-height:11px;transform:scaleX(0.9336);transform-origin:0 0;">20sec</div>
<svg style="position:absolute;left:212px;top:449px" width="12" height="12" shape-rendering="crispEdges"><use href="#rad"/></svg>
<div class="t" style="left:229.70px;top:450.69px;font-size:11px;line-height:11px;transform:scaleX(0.9343);transform-origin:0 0;">1hour</div>
<svg style="position:absolute;left:277px;top:449px" width="12" height="12" shape-rendering="crispEdges"><use href="#rad"/></svg>
<div class="t" style="left:295.50px;top:450.69px;font-size:11px;line-height:11px;transform:scaleX(0.9273);transform-origin:0 0;">12hrs</div>
<svg style="position:absolute;left:344px;top:449px" width="12" height="12" shape-rendering="crispEdges"><use href="#rad"/></svg>
<div class="t" style="left:362.70px;top:450.69px;font-size:11px;line-height:11px;transform:scaleX(0.9273);transform-origin:0 0;">24hrs</div>
<svg style="position:absolute;left:7px;top:472px" width="12" height="12" shape-rendering="crispEdges"><use href="#rad"/></svg>
<div class="t" style="left:25.50px;top:473.69px;font-size:11px;line-height:11px;transform:scaleX(0.9273);transform-origin:0 0;">100m</div>
<svg style="position:absolute;left:71px;top:472px" width="12" height="12" shape-rendering="crispEdges"><use href="#rad"/></svg>
<div class="t" style="left:89.70px;top:473.69px;font-size:11px;line-height:11px;transform:scaleX(0.9273);transform-origin:0 0;">250m</div>
<svg style="position:absolute;left:143px;top:472px" width="12" height="12" shape-rendering="crispEdges"><use href="#rad"/></svg>
<div class="t" style="left:161.60px;top:473.69px;font-size:11px;line-height:11px;transform:scaleX(0.9273);transform-origin:0 0;">500m</div>
<svg style="position:absolute;left:212px;top:472px" width="12" height="12" shape-rendering="crispEdges"><use href="#rad"/></svg>
<div class="t" style="left:229.70px;top:473.69px;font-size:11px;line-height:11px;transform:scaleX(0.9421);transform-origin:0 0;">1852m</div>
<svg style="position:absolute;left:277px;top:472px" width="12" height="12" shape-rendering="crispEdges"><use href="#rad"/></svg>
<svg style="position:absolute;left:344px;top:472px" width="12" height="12" shape-rendering="crispEdges"><use href="#rad"/></svg>
<svg style="position:absolute;left:7px;top:495px" width="12" height="12" shape-rendering="crispEdges"><use href="#rad"/></svg>
<div class="t" style="left:25.50px;top:496.19px;font-size:11px;line-height:11px;transform:scaleX(0.9695);transform-origin:0 0;">@250</div>
<svg style="position:absolute;left:71px;top:495px" width="12" height="12" shape-rendering="crispEdges"><use href="#rad"/></svg>
<div class="t" style="left:89.70px;top:496.19px;font-size:11px;line-height:11px;transform:scaleX(0.9695);transform-origin:0 0;">@500</div>
<svg style="position:absolute;left:143px;top:495px" width="12" height="12" shape-rendering="crispEdges"><use href="#rad"/></svg>
<div class="t" style="left:161.60px;top:496.19px;font-size:11px;line-height:11px;transform:scaleX(0.9671);transform-origin:0 0;">@1km</div>
<svg style="position:absolute;left:212px;top:495px" width="12" height="12" shape-rendering="crispEdges"><use href="#rad"/></svg>
<div class="t" style="left:229.70px;top:496.19px;font-size:11px;line-height:11px;transform:scaleX(0.9087);transform-origin:0 0;">Maximum</div>
<svg style="position:absolute;left:344px;top:495px" width="12" height="12" shape-rendering="crispEdges"><use href="#radd"/></svg>
<div class="t" style="left:362.70px;top:496.19px;font-size:11px;line-height:11px;transform:scaleX(0.9199);transform-origin:0 0;color:#8a8a8a;text-shadow:1px 1px #fff;">Gates</div>
<div style="left:292px;top:469px;width:44px;height:20px;background:#fff;box-shadow:inset 1px 1px #808080,inset -1px -1px #fff,inset 2px 2px #404040,inset -2px -2px #d4d0c8;"></div>
<div class="t" style="left:295.50px;top:473.69px;font-size:11px;line-height:11px;transform:scaleX(0.9421);transform-origin:0 0;">1000m</div>
<div style="left:360px;top:469px;width:44px;height:20px;background:#fff;box-shadow:inset 1px 1px #808080,inset -1px -1px #fff,inset 2px 2px #404040,inset -2px -2px #d4d0c8;"></div>
<div class="t" style="left:363.50px;top:473.69px;font-size:11px;line-height:11px;transform:scaleX(0.9418);transform-origin:0 0;">360min</div>
<div style="left:6px;top:518px;width:13px;height:13px;background:#fff;box-shadow:inset 1px 1px #808080,inset -1px -1px #fff,inset 2px 2px #404040,inset -2px -2px #d4d0c8;"></div>
<svg style="position:absolute;left:6px;top:518px" width="13" height="13" shape-rendering="crispEdges"><use href="#chk"/></svg>
<div class="t" style="left:25.50px;top:520.99px;font-size:11px;line-height:11px;transform:scaleX(0.9455);transform-origin:0 0;">Doppler</div>
<div style="left:71px;top:518px;width:13px;height:13px;background:#fff;box-shadow:inset 1px 1px #808080,inset -1px -1px #fff,inset 2px 2px #404040,inset -2px -2px #d4d0c8;"></div>
<div class="t" style="left:89.70px;top:520.99px;font-size:11px;line-height:11px;transform:scaleX(0.9489);transform-origin:0 0;">Projection</div>
<div style="left:143px;top:518px;width:13px;height:13px;background:#fff;box-shadow:inset 1px 1px #808080,inset -1px -1px #fff,inset 2px 2px #404040,inset -2px -2px #d4d0c8;"></div>
<div class="t" style="left:161.30px;top:520.99px;font-size:11px;line-height:11px;transform:scaleX(0.9496);transform-origin:0 0;">Interpolation</div>
<div style="left:227px;top:518px;width:13px;height:13px;background:#fff;box-shadow:inset 1px 1px #808080,inset -1px -1px #fff,inset 2px 2px #404040,inset -2px -2px #d4d0c8;"></div>
<div class="t" style="left:245.20px;top:520.99px;font-size:11px;line-height:11px;transform:scaleX(0.9183);transform-origin:0 0;">Altitude</div>
<div style="left:288px;top:518px;width:13px;height:13px;background:#d4d0c8;box-shadow:inset 1px 1px #808080,inset -1px -1px #fff,inset 2px 2px #404040,inset -2px -2px #d4d0c8;"></div>
<div class="t" style="left:307.80px;top:520.99px;font-size:11px;line-height:11px;transform:scaleX(0.9193);transform-origin:0 0;color:#8a8a8a;text-shadow:1px 1px #fff;">Constrain</div>
<div style="left:357px;top:518px;width:13px;height:13px;background:#fff;box-shadow:inset 1px 1px #808080,inset -1px -1px #fff,inset 2px 2px #404040,inset -2px -2px #d4d0c8;"></div>
<svg style="position:absolute;left:357px;top:518px" width="13" height="13" shape-rendering="crispEdges"><use href="#chk"/></svg>
<div class="t" style="left:376.60px;top:520.99px;font-size:11px;line-height:11px;transform:scaleX(1.0381);transform-origin:0 0;">1/Leg</div>
<div style="left:0px;top:538px;width:410px;height:1px;background:#808080"></div>
<div style="left:0px;top:539px;width:410px;height:1px;background:#404040"></div>
<div style="left:0px;top:538px;width:1px;height:124px;background:#808080"></div>
<div style="left:1px;top:539px;width:1px;height:123px;background:#404040"></div>
<div style="left:2px;top:540px;width:391px;height:121px;background:#fff"></div>
<div style="left:2px;top:540px;width:303px;height:19px;background:#c8c8c8;box-shadow:inset 1px 1px #fff"></div>
<div style="left:2px;top:559px;width:303px;height:17px;background:#0a246a"></div>
<div style="left:29px;top:540px;width:1px;height:19px;background:#808080"></div>
<div style="left:30px;top:540px;width:1px;height:19px;background:#fff"></div>
<div style="left:29px;top:559px;width:1px;height:17px;background:#9aa8dc"></div>
<div style="left:29px;top:576px;width:1px;height:85px;background:#c4c4c4"></div>
<div style="left:82px;top:540px;width:1px;height:19px;background:#808080"></div>
<div style="left:83px;top:540px;width:1px;height:19px;background:#fff"></div>
<div style="left:82px;top:559px;width:1px;height:17px;background:#9aa8dc"></div>
<div style="left:82px;top:576px;width:1px;height:85px;background:#c4c4c4"></div>
<div style="left:127px;top:540px;width:1px;height:19px;background:#808080"></div>
<div style="left:128px;top:540px;width:1px;height:19px;background:#fff"></div>
<div style="left:127px;top:559px;width:1px;height:17px;background:#9aa8dc"></div>
<div style="left:127px;top:576px;width:1px;height:85px;background:#c4c4c4"></div>
<div style="left:175px;top:540px;width:1px;height:19px;background:#808080"></div>
<div style="left:176px;top:540px;width:1px;height:19px;background:#fff"></div>
<div style="left:175px;top:559px;width:1px;height:17px;background:#9aa8dc"></div>
<div style="left:175px;top:576px;width:1px;height:85px;background:#c4c4c4"></div>
<div style="left:220px;top:540px;width:1px;height:19px;background:#808080"></div>
<div style="left:221px;top:540px;width:1px;height:19px;background:#fff"></div>
<div style="left:220px;top:559px;width:1px;height:17px;background:#9aa8dc"></div>
<div style="left:220px;top:576px;width:1px;height:85px;background:#c4c4c4"></div>
<div style="left:265px;top:540px;width:1px;height:19px;background:#808080"></div>
<div style="left:266px;top:540px;width:1px;height:19px;background:#fff"></div>
<div style="left:265px;top:559px;width:1px;height:17px;background:#9aa8dc"></div>
<div style="left:265px;top:576px;width:1px;height:85px;background:#c4c4c4"></div>
<div style="left:305px;top:540px;width:1px;height:19px;background:#808080"></div>
<div style="left:306px;top:540px;width:1px;height:19px;background:#fff"></div>
<div style="left:305px;top:559px;width:1px;height:17px;background:#9aa8dc"></div>
<div style="left:305px;top:576px;width:1px;height:85px;background:#c4c4c4"></div>
<div class="t" style="left:6.00px;top:545.69px;font-size:11px;line-height:11px;">#</div>
<div class="t" style="left:33.00px;top:545.69px;font-size:11px;line-height:11px;">time</div>
<div class="t" style="left:86.00px;top:545.69px;font-size:11px;line-height:11px;">[m]</div>
<div class="t" style="left:131.00px;top:545.69px;font-size:11px;line-height:11px;">[knots]</div>
<div class="t" style="left:179.00px;top:545.69px;font-size:11px;line-height:11px;">min</div>
<div class="t" style="left:224.00px;top:545.69px;font-size:11px;line-height:11px;">max</div>
<div class="t" style="left:269.00px;top:545.69px;font-size:11px;line-height:11px;">mAcc</div>
<div class="t" style="left:8.00px;top:564.69px;font-size:11px;line-height:11px;color:#fff;">1</div>
<div class="t" style="left:33.00px;top:564.69px;font-size:11px;line-height:11px;color:#fff;">16:58:54</div>
<div class="t" style="left:89.00px;top:564.69px;font-size:11px;line-height:11px;color:#fff;">34.6</div>
<div class="t" style="left:131.00px;top:564.69px;font-size:11px;line-height:11px;color:#fff;">33.637</div>
<div class="t" style="left:179.00px;top:564.69px;font-size:11px;line-height:11px;color:#fff;">33.454</div>
<div class="t" style="left:224.00px;top:564.69px;font-size:11px;line-height:11px;color:#fff;">33.821</div>
<div class="t" style="left:269.00px;top:564.69px;font-size:11px;line-height:11px;color:#fff;">0.2</div>
<div class="t" style="left:8.00px;top:581.69px;font-size:11px;line-height:11px;color:#000;">2</div>
<div class="t" style="left:33.00px;top:581.69px;font-size:11px;line-height:11px;color:#000;">16:38:20</div>
<div class="t" style="left:89.00px;top:581.69px;font-size:11px;line-height:11px;color:#000;">31.3</div>
<div class="t" style="left:131.00px;top:581.69px;font-size:11px;line-height:11px;color:#000;">30.430</div>
<div class="t" style="left:179.00px;top:581.69px;font-size:11px;line-height:11px;color:#000;">30.361</div>
<div class="t" style="left:224.00px;top:581.69px;font-size:11px;line-height:11px;color:#000;">30.499</div>
<div class="t" style="left:269.00px;top:581.69px;font-size:11px;line-height:11px;color:#000;">0.4</div>
<div class="t" style="left:8.00px;top:598.69px;font-size:11px;line-height:11px;color:#000;">3</div>
<div class="t" style="left:33.00px;top:598.69px;font-size:11px;line-height:11px;color:#000;">16:45:58</div>
<div class="t" style="left:89.00px;top:598.69px;font-size:11px;line-height:11px;color:#000;">29.0</div>
<div class="t" style="left:131.00px;top:598.69px;font-size:11px;line-height:11px;color:#000;">28.176</div>
<div class="t" style="left:179.00px;top:598.69px;font-size:11px;line-height:11px;color:#000;">27.350</div>
<div class="t" style="left:224.00px;top:598.69px;font-size:11px;line-height:11px;color:#000;">29.002</div>
<div class="t" style="left:269.00px;top:598.69px;font-size:11px;line-height:11px;color:#000;">1.1</div>
<div class="t" style="left:8.00px;top:615.69px;font-size:11px;line-height:11px;color:#000;">4</div>
<div class="t" style="left:33.00px;top:615.69px;font-size:11px;line-height:11px;color:#000;">17:27:39</div>
<div class="t" style="left:89.00px;top:615.69px;font-size:11px;line-height:11px;color:#000;">29.0</div>
<div class="t" style="left:131.00px;top:615.69px;font-size:11px;line-height:11px;color:#000;">28.164</div>
<div class="t" style="left:179.00px;top:615.69px;font-size:11px;line-height:11px;color:#000;">27.912</div>
<div class="t" style="left:224.00px;top:615.69px;font-size:11px;line-height:11px;color:#000;">28.417</div>
<div class="t" style="left:269.00px;top:615.69px;font-size:11px;line-height:11px;color:#000;">7.3</div>
<div class="t" style="left:8.00px;top:632.69px;font-size:11px;line-height:11px;color:#000;">5</div>
<div class="t" style="left:33.00px;top:632.69px;font-size:11px;line-height:11px;color:#000;">17:53:56</div>
<div class="t" style="left:89.00px;top:632.69px;font-size:11px;line-height:11px;color:#000;">27.9</div>
<div class="t" style="left:131.00px;top:632.69px;font-size:11px;line-height:11px;color:#000;">27.096</div>
<div class="t" style="left:179.00px;top:632.69px;font-size:11px;line-height:11px;color:#000;">27.056</div>
<div class="t" style="left:224.00px;top:632.69px;font-size:11px;line-height:11px;color:#000;">27.136</div>
<div class="t" style="left:269.00px;top:632.69px;font-size:11px;line-height:11px;color:#000;">0.3</div>
<div class="t" style="left:8.00px;top:649.69px;font-size:11px;line-height:11px;color:#000;">6</div>
<div class="t" style="left:33.00px;top:649.69px;font-size:11px;line-height:11px;color:#000;">16:40:58</div>
<div class="t" style="left:89.00px;top:649.69px;font-size:11px;line-height:11px;color:#000;">27.8</div>
<div class="t" style="left:131.00px;top:649.69px;font-size:11px;line-height:11px;color:#000;">26.981</div>
<div class="t" style="left:179.00px;top:649.69px;font-size:11px;line-height:11px;color:#000;">26.611</div>
<div class="t" style="left:224.00px;top:649.69px;font-size:11px;line-height:11px;color:#000;">27.350</div>
<div class="t" style="left:269.00px;top:649.69px;font-size:11px;line-height:11px;color:#000;">0.5</div>
<div style="left:393px;top:539px;width:16px;height:122px;background-color:#fff;background-image:repeating-conic-gradient(#d4d0c8 0 25%,#fff 0 50%);background-size:2px 2px;"></div>
<div style="left:393px;top:540px;width:16px;height:15px;background:#d4d0c8;box-shadow:inset -1px -1px #404040,inset 1px 1px #fff,inset -2px -2px #808080,inset 2px 2px #d4d0c8;"></div>
<svg style="position:absolute;left:0;top:0;overflow:visible" width="1" height="1"><path d="M397.5 549.25 L404.5 549.25 L401 545.75 Z" fill="#000"/></svg>
<div style="left:393px;top:555px;width:16px;height:21px;background:#d4d0c8;box-shadow:inset -1px -1px #404040,inset 1px 1px #fff,inset -2px -2px #808080,inset 2px 2px #d4d0c8;"></div>
<div style="left:393px;top:645px;width:16px;height:16px;background:#d4d0c8;box-shadow:inset -1px -1px #404040,inset 1px 1px #fff,inset -2px -2px #808080,inset 2px 2px #d4d0c8;"></div>
<svg style="position:absolute;left:0;top:0;overflow:visible" width="1" height="1"><path d="M397.5 651.25 L404.5 651.25 L401 654.75 Z" fill="#000"/></svg>
<div style="left:409px;top:538px;width:1px;height:124px;background:#fff"></div>
<div style="left:0px;top:661px;width:410px;height:1px;background:#fff"></div>
<div style="left:4px;top:667px;width:41px;height:18px;background:#d4d0c8;box-shadow:inset 1px 1px #808080,inset -1px -1px #fff,inset 2px 2px #404040,inset -2px -2px #d4d0c8;"></div>
<div class="t" style="left:12.40px;top:671.09px;font-size:11px;line-height:11px;transform:scaleX(0.9796);transform-origin:0 0;">25</div>
<div style="left:33px;top:668px;width:12px;height:8px;background:#d4d0c8;box-shadow:inset -1px -1px #404040,inset 1px 1px #fff,inset -2px -2px #808080,inset 2px 2px #d4d0c8;"></div>
<div style="left:33px;top:676px;width:12px;height:8px;background:#d4d0c8;box-shadow:inset -1px -1px #404040,inset 1px 1px #fff,inset -2px -2px #808080,inset 2px 2px #d4d0c8;"></div>
<svg style="position:absolute;left:0;top:0;overflow:visible" width="1" height="1"><path d="M36.5 673.25 L41.5 673.25 L39 670.75 Z" fill="#000"/></svg>
<svg style="position:absolute;left:0;top:0;overflow:visible" width="1" height="1"><path d="M36.5 678.75 L41.5 678.75 L39 681.25 Z" fill="#000"/></svg>
<div class="t" style="left:52.60px;top:671.09px;font-size:11px;line-height:11px;transform:scaleX(0.9290);transform-origin:0 0;">rows</div>
<div class="t" style="left:96.60px;top:671.09px;font-size:11px;line-height:11px;transform:scaleX(1.0000);transform-origin:0 0;">Avg 2:</div>
<div style="left:135px;top:667px;width:53px;height:19px;background:#d4d0c8;box-shadow:inset 1px 1px #808080,inset -1px -1px #fff,inset 2px 2px #404040,inset -2px -2px #d4d0c8;"></div>
<div class="t" style="left:138.40px;top:671.09px;font-size:11px;line-height:11px;transform:scaleX(0.9658);transform-origin:0 0;">32.034</div>
<div class="t" style="left:203.70px;top:671.09px;font-size:11px;line-height:11px;transform:scaleX(1.0000);transform-origin:0 0;">Avg 3:</div>
<div style="left:241px;top:667px;width:53px;height:19px;background:#d4d0c8;box-shadow:inset 1px 1px #808080,inset -1px -1px #fff,inset 2px 2px #404040,inset -2px -2px #d4d0c8;"></div>
<div class="t" style="left:244.60px;top:671.09px;font-size:11px;line-height:11px;transform:scaleX(0.9658);transform-origin:0 0;">30.748</div>
<div class="t" style="left:309.60px;top:671.09px;font-size:11px;line-height:11px;transform:scaleX(1.0000);transform-origin:0 0;">Avg 5:</div>
<div style="left:348px;top:667px;width:53px;height:19px;background:#d4d0c8;box-shadow:inset 1px 1px #808080,inset -1px -1px #fff,inset 2px 2px #404040,inset -2px -2px #d4d0c8;"></div>
<div class="t" style="left:350.80px;top:671.09px;font-size:11px;line-height:11px;transform:scaleX(0.9658);transform-origin:0 0;">29.501</div>
<div style="left:0px;top:687px;width:412px;height:1px;background:#808080"></div>
<div style="left:0px;top:688px;width:412px;height:1px;background:#fff"></div>
<div style="left:0px;top:692px;width:1358px;height:1px;background:#fff"></div>
<div style="left:0px;top:688px;width:1358px;height:24px;background:#d4d0c8"></div>
<div style="left:0px;top:692px;width:1358px;height:1px;background:#fff"></div>
<div class="t" style="left:-2.00px;top:699.69px;font-size:11px;line-height:11px;transform:scaleX(0.9884);transform-origin:0 0;">21.02.2018 16:58:47 59.180km/h 31.955knots 31.95Doppler&nbsp; 0Sats</div>
<div style="left:1270px;top:696px;width:25px;height:15px;box-shadow:inset 1px 1px #808080,inset -1px -1px #fff"></div>
<div style="left:1298px;top:696px;width:27px;height:15px;box-shadow:inset 1px 1px #808080,inset -1px -1px #fff"></div>
<div style="left:1328px;top:696px;width:30px;height:15px;box-shadow:inset 1px 1px #808080,inset -1px -1px #fff"></div>
<svg style="position:absolute;left:1340px;top:696px" width="18" height="16"><path d="M17 4 L5 16 M17 8 L9 16 M17 12 L13 16" stroke="#808080" stroke-width="1"/><path d="M17 5 L6 16 M17 9 L10 16 M17 13 L14 16" stroke="#fff" stroke-width="1"/></svg>
<div style="left:412px;top:41px;width:5px;height:651px;background:#d4d0c8"></div>
<div style="left:417px;top:41px;width:923px;height:384px;background:#000"></div>
<div style="left:418px;top:41px;width:921px;height:383px;background:#dcdcdc"></div>
<div style="left:418px;top:41px;width:921px;height:1px;background:#ececec"></div>
<div style="left:417px;top:425px;width:923px;height:2px;background:#f0f0f0"></div>
<div style="left:417px;top:427px;width:923px;height:202px;background:#000"></div>
<div style="left:418px;top:428px;width:921px;height:200px;background:#dcdcdc"></div>
<svg style="position:absolute;left:0;top:0" width="1358" height="715"><g stroke="#000" stroke-width="1" stroke-dasharray="3 3" shape-rendering="crispEdges"><line x1="542.5" y1="41" x2="542.5" y2="424"/><line x1="666.5" y1="41" x2="666.5" y2="424"/><line x1="791.5" y1="41" x2="791.5" y2="424"/><line x1="915.5" y1="41" x2="915.5" y2="424"/><line x1="1040.5" y1="41" x2="1040.5" y2="424"/><line x1="1164.5" y1="41" x2="1164.5" y2="424"/><line x1="1289.5" y1="41" x2="1289.5" y2="424"/><line x1="418" y1="123.5" x2="1339" y2="123.5"/><line x1="418" y1="247.5" x2="1339" y2="247.5"/><line x1="418" y1="372.5" x2="1339" y2="372.5"/></g><svg x="418" y="41" width="921" height="383" viewBox="418 41 921 383" overflow="hidden"><polyline points="632.6,424.7 655.7,403.8 666.2,389" stroke="#e8881c" stroke-width="3" fill="none" stroke-linejoin="round" stroke-linecap="round"/><polyline points="666.2,389 674.5,380.7 687,371.3" stroke="#eba020" stroke-width="3" fill="none" stroke-linejoin="round" stroke-linecap="round"/><polyline points="687,371.3 697.6,361.8 710.2,350.3" stroke="#f0c020" stroke-width="3" fill="none" stroke-linejoin="round" stroke-linecap="round"/><polyline points="710.2,350.3 729,337.7 750,322" stroke="#f2dc28" stroke-width="3" fill="none" stroke-linejoin="round" stroke-linecap="round"/><polyline points="750,322 771,306.2 790,291.5" stroke="#f4ec40" stroke-width="3" fill="none" stroke-linejoin="round" stroke-linecap="round"/><polyline points="790,291.5 812.5,278.5" stroke="#f6f290" stroke-width="3" fill="none" stroke-linejoin="round" stroke-linecap="round"/><polyline points="812.5,278.5 836.6,267 866,248" stroke="#f8f6d0" stroke-width="3" fill="none" stroke-linejoin="round" stroke-linecap="round"/><polyline points="866,248 887,232.4 914.3,216.6 943.6,201" stroke="#ffffff" stroke-width="3" fill="none" stroke-linejoin="round" stroke-linecap="round"/><polyline points="943.6,201 1064.7,136.6" stroke="#000" stroke-width="2.2" fill="none" stroke-linejoin="round" stroke-linecap="round"/><polyline points="1064.7,136.6 1085.7,116.1" stroke="#f4f040" stroke-width="3" fill="none" stroke-linejoin="round" stroke-linecap="round"/><polyline points="1085.7,116.1 1058.5,111" stroke="#f07020" stroke-width="3" fill="none" stroke-linejoin="round" stroke-linecap="round"/><polyline points="1058.5,111 1033.3,110.4 1012.3,102.7" stroke="#e84818" stroke-width="3" fill="none" stroke-linejoin="round" stroke-linecap="round"/><polyline points="1012.3,102.7 992.4,102.7" stroke="#c81414" stroke-width="3" fill="none" stroke-linejoin="round" stroke-linecap="round"/><polyline points="992.4,102.7 983,99.3" stroke="#801010" stroke-width="3" fill="none" stroke-linejoin="round" stroke-linecap="round"/><polyline points="983,99.3 976.6,97.8 968.2,100 965,103" stroke="#640808" stroke-width="3" fill="none" stroke-linejoin="round" stroke-linecap="round"/><polyline points="965,103 963,116.7" stroke="#800808" stroke-width="3" fill="none" stroke-linejoin="round" stroke-linecap="round"/><polyline points="963,116.7 957.8,123" stroke="#b81010" stroke-width="3" fill="none" stroke-linejoin="round" stroke-linecap="round"/><polyline points="957.8,123 947.3,133.5 935.7,140.8" stroke="#dc1818" stroke-width="3" fill="none" stroke-linejoin="round" stroke-linecap="round"/></svg><rect x="925" y="178" width="2" height="45" fill="#1a9a1a"/><rect x="419.5" y="429.5" width="918" height="197" fill="none" stroke="#000" stroke-width="1" stroke-dasharray="1 1" shape-rendering="crispEdges"/><rect x="870" y="430" width="42" height="198" fill="#00c0c8"/><g stroke="#000" stroke-width="1" shape-rendering="crispEdges"><line x1="419" y1="451.5" x2="1338" y2="451.5" stroke-dasharray="18 6" stroke-dashoffset="1"/><line x1="419" y1="511.5" x2="1338" y2="511.5" stroke-dasharray="18 6" stroke-dashoffset="1"/><line x1="419" y1="570.5" x2="1338" y2="570.5" stroke-dasharray="18 6" stroke-dashoffset="1"/><line x1="419" y1="481.5" x2="1338" y2="481.5" stroke-dasharray="3 3" stroke-dashoffset="1"/><line x1="419" y1="540.5" x2="1338" y2="540.5" stroke-dasharray="3 3" stroke-dashoffset="1"/><line x1="419" y1="600.5" x2="1338" y2="600.5" stroke-dasharray="3 3" stroke-dashoffset="1"/><line x1="881.5" y1="430" x2="881.5" y2="628" stroke-dasharray="3 3"/><line x1="1028.5" y1="430" x2="1028.5" y2="628" stroke-dasharray="3 3"/></g><svg x="418" y="428" width="921" height="200" viewBox="418 428 921 200" overflow="hidden"><polyline points="417.2,552.5 428.3,552.9 441.5,553.3" stroke="#e02818" stroke-width="3" fill="none" stroke-linejoin="round" stroke-linecap="round"/><polyline points="441.5,553.3 459.2,547 478.3,538.9" stroke="#e85520" stroke-width="3" fill="none" stroke-linejoin="round" stroke-linecap="round"/><polyline points="478.3,538.9 501.9,513.6 521,513.6" stroke="#f0a820" stroke-width="3" fill="none" stroke-linejoin="round" stroke-linecap="round"/><polyline points="521,513.6 544.6,522.7 560.8,524.9 571.1,524.6 585.8,522.4" stroke="#e89828" stroke-width="3" fill="none" stroke-linejoin="round" stroke-linecap="round"/><polyline points="585.8,522.4 615,510.2" stroke="#f0c028" stroke-width="3" fill="none" stroke-linejoin="round" stroke-linecap="round"/><polyline points="615,510.2 650,492 690.7,473.2" stroke="#f2e030" stroke-width="3" fill="none" stroke-linejoin="round" stroke-linecap="round"/><polyline points="690.7,473.2 732,467.4" stroke="#f4f080" stroke-width="3" fill="none" stroke-linejoin="round" stroke-linecap="round"/><polyline points="732,467.4 756.7,455 775.3,439" stroke="#f8f8d0" stroke-width="3" fill="none" stroke-linejoin="round" stroke-linecap="round"/><polyline points="775.3,439 802,439 855.7,429.9 870,429" stroke="#fafaf0" stroke-width="3" fill="none" stroke-linejoin="round" stroke-linecap="round"/><polyline points="902.5,429 943,628" stroke="#000" stroke-width="2.5" fill="none" stroke-linejoin="round" stroke-linecap="round"/><polyline points="1048.9,628 1070.3,472.7 1113.1,496.6" stroke="#f8f850" stroke-width="3" fill="none" stroke-linejoin="round" stroke-linecap="round"/><polyline points="1113.1,496.6 1155.9,538.7 1196.2,544.5" stroke="#e86020" stroke-width="3" fill="none" stroke-linejoin="round" stroke-linecap="round"/><polyline points="1196.2,544.5 1217.7,552.8" stroke="#e04020" stroke-width="3" fill="none" stroke-linejoin="round" stroke-linecap="round"/><polyline points="1217.7,552.8 1239,570.9" stroke="#d01018" stroke-width="3" fill="none" stroke-linejoin="round" stroke-linecap="round"/><polyline points="1239,570.9 1281.9,598.1 1302,588 1324.7,600.6" stroke="#800810" stroke-width="3" fill="none" stroke-linejoin="round" stroke-linecap="round"/></svg></svg>
<div class="t" style="left:931.50px;top:207.65px;font-size:14px;line-height:14px;transform:scaleX(1.0164);transform-origin:0 0;font-weight:bold;color:#18a018;">33.454</div>
<div class="t" style="left:420.00px;top:451.15px;font-size:14px;line-height:14px;transform:scaleX(0.9196);transform-origin:0 0;font-weight:bold;">30</div>
<div class="t" style="left:420.00px;top:511.15px;font-size:14px;line-height:14px;transform:scaleX(0.9196);transform-origin:0 0;font-weight:bold;">20</div>
<div class="t" style="left:420.00px;top:570.15px;font-size:14px;line-height:14px;transform:scaleX(0.9196);transform-origin:0 0;font-weight:bold;">10</div>
<div class="t" style="left:1011.50px;top:427.15px;font-size:14px;line-height:14px;transform:scaleX(0.9358);transform-origin:0 0;font-weight:bold;">16:59</div>
<div style="left:417px;top:424px;width:923px;height:1px;background:#000"></div>
<div style="left:417px;top:427px;width:923px;height:1px;background:#000"></div>
<div style="left:417px;top:628px;width:923px;height:1px;background:#000"></div>
<div style="left:1339px;top:427px;width:1px;height:202px;background:#000"></div>
<div style="left:417px;top:629px;width:923px;height:63px;background:#d4d0c8"></div>
<div style="left:418px;top:637px;width:920px;height:1px;background:#808080"></div>
<div style="left:418px;top:638px;width:920px;height:1px;background:#fff"></div>
<div style="left:418px;top:637px;width:1px;height:52px;background:#808080"></div>
<div style="left:419px;top:638px;width:1px;height:51px;background:#fff"></div>
<div style="left:418px;top:688px;width:920px;height:1px;background:#808080"></div>
<div style="left:418px;top:689px;width:921px;height:1px;background:#fff"></div>
<div style="left:1338px;top:637px;width:1px;height:52px;background:#808080"></div>
<div style="left:1339px;top:637px;width:1px;height:53px;background:#fff"></div>
<div style="left:423px;top:631px;width:38px;height:12px;background:#d4d0c8"></div>
<div class="t" style="left:425.50px;top:633.19px;font-size:11px;line-height:11px;transform:scaleX(0.9515);transform-origin:0 0;">Display</div>
<div style="left:424px;top:648px;width:13px;height:13px;background:#fff;box-shadow:inset 1px 1px #808080,inset -1px -1px #fff,inset 2px 2px #404040,inset -2px -2px #d4d0c8;"></div>
<svg style="position:absolute;left:424px;top:648px" width="13" height="13" shape-rendering="crispEdges"><use href="#chk"/></svg>
<div class="t" style="left:444.40px;top:650.99px;font-size:11px;line-height:11px;transform:scaleX(1.0123);transform-origin:0 0;">Tracks</div>
<div style="left:478px;top:648px;width:13px;height:13px;background:#fff;box-shadow:inset 1px 1px #808080,inset -1px -1px #fff,inset 2px 2px #404040,inset -2px -2px #d4d0c8;"></div>
<div class="t" style="left:497.70px;top:650.99px;font-size:11px;line-height:11px;transform:scaleX(0.9136);transform-origin:0 0;">Pnts</div>
<div style="left:522px;top:648px;width:13px;height:13px;background:#fff;box-shadow:inset 1px 1px #808080,inset -1px -1px #fff,inset 2px 2px #404040,inset -2px -2px #d4d0c8;"></div>
<div class="t" style="left:541.80px;top:650.99px;font-size:11px;line-height:11px;transform:scaleX(0.9290);transform-origin:0 0;">Dop.</div>
<div style="left:574px;top:648px;width:13px;height:13px;background:#fff;box-shadow:inset 1px 1px #808080,inset -1px -1px #fff,inset 2px 2px #404040,inset -2px -2px #d4d0c8;"></div>
<svg style="position:absolute;left:574px;top:648px" width="13" height="13" shape-rendering="crispEdges"><use href="#chk"/></svg>
<div class="t" style="left:592.80px;top:650.99px;font-size:11px;line-height:11px;transform:scaleX(0.9532);transform-origin:0 0;">Vic.</div>
<div style="left:618px;top:648px;width:13px;height:13px;background:#fff;box-shadow:inset 1px 1px #808080,inset -1px -1px #fff,inset 2px 2px #404040,inset -2px -2px #d4d0c8;"></div>
<div class="t" style="left:637.10px;top:650.99px;font-size:11px;line-height:11px;transform:scaleX(0.9105);transform-origin:0 0;">Ovl.</div>
<div style="left:663px;top:648px;width:13px;height:13px;background:#d4d0c8;box-shadow:inset 1px 1px #808080,inset -1px -1px #fff,inset 2px 2px #404040,inset -2px -2px #d4d0c8;"></div>
<div class="t" style="left:682.00px;top:650.99px;font-size:11px;line-height:11px;transform:scaleX(0.9455);transform-origin:0 0;color:#8a8a8a;text-shadow:1px 1px #fff;">Sats</div>
<div style="left:709px;top:648px;width:13px;height:13px;background:#fff;box-shadow:inset 1px 1px #808080,inset -1px -1px #fff,inset 2px 2px #404040,inset -2px -2px #d4d0c8;"></div>
<div class="t" style="left:727.60px;top:650.99px;font-size:11px;line-height:11px;transform:scaleX(1.0518);transform-origin:0 0;">Acc</div>
<div style="left:754px;top:648px;width:13px;height:13px;background:#d4d0c8;box-shadow:inset 1px 1px #808080,inset -1px -1px #fff,inset 2px 2px #404040,inset -2px -2px #d4d0c8;"></div>
<div class="t" style="left:773.20px;top:650.99px;font-size:11px;line-height:11px;transform:scaleX(0.9744);transform-origin:0 0;color:#8a8a8a;text-shadow:1px 1px #fff;">HDoP</div>
<div style="left:474px;top:648px;width:5px;height:14px;background:#d4d0c8"></div>
<div style="left:424px;top:669px;width:15px;height:9px;background:#d4d0c8;box-shadow:inset -1px -1px #404040,inset 1px 1px #fff,inset -2px -2px #808080,inset 2px 2px #d4d0c8;"></div>
<div style="left:424px;top:678px;width:15px;height:9px;background:#d4d0c8;box-shadow:inset -1px -1px #404040,inset 1px 1px #fff,inset -2px -2px #808080,inset 2px 2px #d4d0c8;"></div>
<svg style="position:absolute;left:0;top:0;overflow:visible" width="1" height="1"><path d="M428.5 675.0 L434.5 675.0 L431.5 672.0 Z" fill="#000"/></svg>
<svg style="position:absolute;left:0;top:0;overflow:visible" width="1" height="1"><path d="M428.5 681.0 L434.5 681.0 L431.5 684.0 Z" fill="#000"/></svg>
<svg style="position:absolute;left:455px;top:672px" width="12" height="12" shape-rendering="crispEdges"><use href="#rad"/><use href='#dot'/></svg>
<div class="t" style="left:473.00px;top:673.29px;font-size:11px;line-height:11px;transform:scaleX(0.9696);transform-origin:0 0;">knots</div>
<svg style="position:absolute;left:507px;top:672px" width="12" height="12" shape-rendering="crispEdges"><use href="#rad"/></svg>
<div class="t" style="left:524.80px;top:673.29px;font-size:11px;line-height:11px;transform:scaleX(1.0356);transform-origin:0 0;">km/h</div>
<svg style="position:absolute;left:559px;top:672px" width="12" height="12" shape-rendering="crispEdges"><use href="#rad"/></svg>
<div class="t" style="left:577.40px;top:673.29px;font-size:11px;line-height:11px;transform:scaleX(0.9393);transform-origin:0 0;">mph</div>
<div style="left:609px;top:668px;width:30px;height:20px;background:#d4d0c8;box-shadow:inset -1px -1px #404040,inset 1px 1px #fff,inset -2px -2px #808080,inset 2px 2px #d4d0c8;"></div>
<div class="t" style="left:621.60px;top:672.69px;font-size:11px;line-height:11px;transform:scaleX(0.9688);transform-origin:0 0;">&lt;</div>
<div style="left:641px;top:668px;width:39px;height:20px;background:#d4d0c8;box-shadow:inset -1px -1px #404040,inset 1px 1px #fff,inset -2px -2px #808080,inset 2px 2px #d4d0c8;"></div>
<div class="t" style="left:650.30px;top:672.69px;font-size:11px;line-height:11px;transform:scaleX(0.9536);transform-origin:0 0;">Stop</div>
<div style="left:682px;top:668px;width:30px;height:20px;background:#d4d0c8;box-shadow:inset -1px -1px #404040,inset 1px 1px #fff,inset -2px -2px #808080,inset 2px 2px #d4d0c8;"></div>
<div class="t" style="left:694.30px;top:672.69px;font-size:11px;line-height:11px;transform:scaleX(0.8438);transform-origin:0 0;">&gt;</div>
<div class="t" style="left:715.70px;top:672.69px;font-size:11px;line-height:11px;transform:scaleX(0.9297);transform-origin:0 0;">Speed:</div>
<div style="left:754px;top:666px;width:50px;height:19px;background:#d4d0c8;box-shadow:inset 1px 1px #808080,inset -1px -1px #fff,inset 2px 2px #404040,inset -2px -2px #d4d0c8;"></div>
<div class="t" style="left:759.30px;top:670.99px;font-size:11px;line-height:11px;transform:scaleX(0.9628);transform-origin:0 0;">0.10s</div>
<div style="left:790px;top:668px;width:12px;height:8px;background:#d4d0c8;box-shadow:inset -1px -1px #404040,inset 1px 1px #fff,inset -2px -2px #808080,inset 2px 2px #d4d0c8;"></div>
<div style="left:790px;top:676px;width:12px;height:8px;background:#d4d0c8;box-shadow:inset -1px -1px #404040,inset 1px 1px #fff,inset -2px -2px #808080,inset 2px 2px #d4d0c8;"></div>
<svg style="position:absolute;left:0;top:0;overflow:visible" width="1" height="1"><path d="M793.5 673.25 L798.5 673.25 L796 670.75 Z" fill="#000"/></svg>
<svg style="position:absolute;left:0;top:0;overflow:visible" width="1" height="1"><path d="M793.5 678.75 L798.5 678.75 L796 681.25 Z" fill="#000"/></svg>
<div style="left:1340px;top:41px;width:18px;height:651px;background:#d4d0c8"></div>
<div style="left:1341px;top:41px;width:16px;height:635px;background-color:#fff;background-image:repeating-conic-gradient(#d4d0c8 0 25%,#fff 0 50%);background-size:2px 2px;"></div>
<div style="left:1340px;top:41px;width:1px;height:635px;background:#ececec"></div>
<div style="left:1341px;top:41px;width:16px;height:16px;background:#d4d0c8;box-shadow:inset -1px -1px #404040,inset 1px 1px #fff,inset -2px -2px #808080,inset 2px 2px #d4d0c8;"></div>
<svg style="position:absolute;left:0;top:0;overflow:visible" width="1" height="1"><path d="M1345.5 50.75 L1352.5 50.75 L1349 47.25 Z" fill="#000"/></svg>
<div style="left:1341px;top:95px;width:16px;height:579px;background:#d4d0c8;box-shadow:inset -1px -1px #404040,inset 1px 1px #fff,inset -2px -2px #808080,inset 2px 2px #d4d0c8;"></div>
<div style="left:1341px;top:676px;width:16px;height:15px;background:#d4d0c8;box-shadow:inset -1px -1px #404040,inset 1px 1px #fff,inset -2px -2px #808080,inset 2px 2px #d4d0c8;"></div>
<svg style="position:absolute;left:0;top:0;overflow:visible" width="1" height="1"><path d="M1345.5 681.75 L1352.5 681.75 L1349 685.25 Z" fill="#000"/></svg>
<div style="left:1339px;top:40px;width:1px;height:385px;background:#000"></div>
</body></html>
